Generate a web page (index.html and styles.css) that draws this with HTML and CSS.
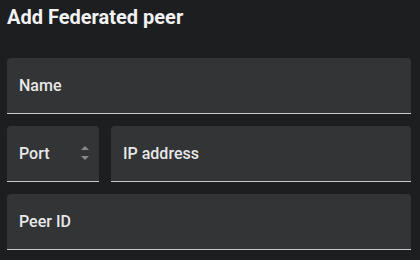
FILE: index.html
```html
<!DOCTYPE html>
<html>
<head>
<meta charset="utf-8">
<link rel="stylesheet" href="styles.css">
</head>
<body>
<div class="dialog">
  <h1 class="title">Add Federated peer</h1>
  <div class="form">
    <div class="field"><span class="label">Name</span></div>
    <div class="row">
      <div class="field port"><span class="label">Port</span>
        <svg class="spin" width="8" height="15" viewBox="0 0 8 15"><path d="M4 0 L8 4 L0 4 Z M0 10 L8 10 L4 14 Z" fill="#85888c"/></svg>
      </div>
      <div class="field ip"><span class="label">IP address</span></div>
    </div>
    <div class="field"><span class="label">Peer ID</span></div>
  </div>
</div>
</body>
</html>
```
FILE: styles.css
```css
html, body {
  margin: 0;
  padding: 0;
  background: #1d1e20;
  width: 420px;
  height: 260px;
  overflow: hidden;
}
.dialog {
  padding: 5px 9px 0 7px;
  font-family: Roboto, "Noto Sans", sans-serif;
}
.title {
  margin: 0;
  font-size: 20px;
  font-weight: 700;
  color: #f2f2f2;
  line-height: 24px;
  height: 53px;
}
.form {
  display: flex;
  flex-direction: column;
  gap: 12px;
}
.row {
  display: flex;
  gap: 12px;
}
.field {
  height: 55px;
  background: #333436;
  border-radius: 4px 4px 0 0;
  border-bottom: 1px solid #c9c9c9;
  display: flex;
  align-items: center;
  padding: 0 12px;
}
.port {
  width: 70px;
  justify-content: space-between;
  padding-right: 10px;
}
.ip {
  flex: 1;
}
.label {
  font-size: 16px;
  font-weight: 500;
  color: #e8e8e8;
}
.spin {
  display: block;
}
```
